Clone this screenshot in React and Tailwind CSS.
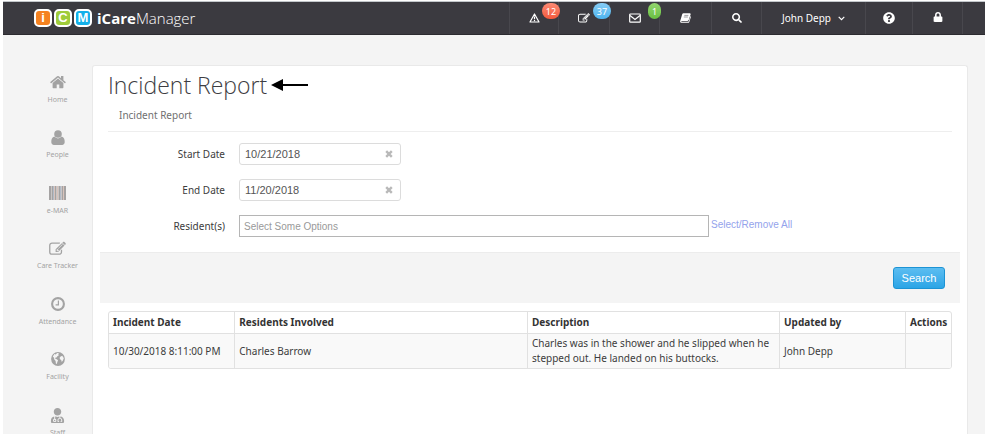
import React from "react";
import { FaLock, FaQuestionCircle, FaSearch, FaUserMd } from "react-icons/fa";

function HomeIcon() {
  return (
    <svg viewBox="0 0 16 14" className="h-[14px] w-4" fill="currentColor" aria-hidden="true">
      <path d="M8 3.6 2.6 8.1v4.4c0 .4.3.7.7.7h3.4V9.6h2.6v3.6h3.4c.4 0 .7-.3.7-.7V8.100z" />
      <path d="M15.700 7.100 13.400 5.200V1.300c0-.2-.1-.3-.3-.3h-1.800c-.2 0-.3.1-.3.3v1.900L8.900 1.300a1.400 1.400 0 0 0-1.800 0L.3 7.100c-.1.100-.1.300 0 .4l.6.700c.1.100.3.100.4 0L8 2.600l6.700 5.600c.1.100.3.100.4 0l.6-.7c.1-.1.1-.3 0-.4z" />
    </svg>
  );
}

function PersonIcon() {
  return (
    <svg viewBox="0 0 14 15" className="h-[15px] w-[14px]" fill="currentColor" aria-hidden="true">
      <circle cx="7" cy="4" r="3.8" />
      <path d="M3.400 6.600C1 7 .3 9.400.3 12.100.3 13.800 1.300 15 2.900 15h8.200c1.600 0 2.600-1.200 2.600-2.900 0-2.700-.7-5.100-3.100-5.500A5.200 5.200 0 0 1 7 8.500a5.200 5.200 0 0 1-3.600-1.900z" />
    </svg>
  );
}

function BarcodeIcon() {
  return (
    <svg viewBox="0 0 17 14" className="h-[14px] w-[17px]" aria-hidden="true">
      <path fill="#c9c5c5" d="M0 0h17v14H0z" />
      <path fill="#a5a3a3" d="M0 0h2v14H0zM3 0h1v14H3zM6 0h1v14H6zM10 0h1v14h-1zM13 0h1v14h-1zM15 0h2v14h-2z" />
      <path fill="#d8c3bb" d="M5 0h1v14H5zM8 0h1v14H8zM14 0h1v14h-1z" />
      <path fill="#b2bcc9" d="M4 0h1v14H4zM11 0h1v14h-1z" />
    </svg>
  );
}

function EditIcon({ className }) {
  return (
    <svg viewBox="0 0 18 15" className={className} fill="currentColor" aria-hidden="true">
      <path d="M3.200 1.100h7.400c.4 0 .8.100 1.100.200.2.100.2.300.1.400l-.7.700c-.1.100-.2.100-.3.100H3.200c-1 0-1.700.8-1.700 1.700v6.900c0 1 .7 1.700 1.700 1.700h7.600c1 0 1.700-.7 1.700-1.700V9.600c0-.1 0-.2.100-.2l.7-.7c.2-.2.600-.1.600.2v2.200c0 1.700-1.400 3.100-3.100 3.100H3.200A3.100 3.100 0 0 1 .1 11.100V4.200c0-1.700 1.400-3.100 3.100-3.100z" />
      <path fillRule="evenodd" d="m13.800 1.600 2.600 2.600-6.700 6.900H7V8.400zM8 8.900v.7h.8v.8h.8l.9-.9-1.600-1.500zM14 3.100 9.600 7.500c-.2.200.1.500.3.300l4.400-4.400c.2-.2-.1-.5-.3-.3z" />
      <path d="m17.500 3.200-.7.700-2.600-2.600.7-.7c.4-.4 1-.4 1.400 0l1.200 1.200c.4.400.4 1 0 1.400z" />
    </svg>
  );
}

function ClockIcon() {
  return (
    <svg viewBox="0 0 14 14" className="h-[14px] w-[14px]" fill="none" stroke="currentColor" aria-hidden="true">
      <circle cx="7" cy="7" r="5.900" strokeWidth="2.100" />
      <path strokeWidth="1.200" d="M7.400 3.600v4.200H4.600" />
    </svg>
  );
}

function GlobeIcon() {
  return (
    <svg viewBox="0 0 14 14" className="h-[14px] w-[14px]" aria-hidden="true">
      <circle cx="7" cy="7" r="6.900" fill="currentColor" />
      <path fill="#f4f4f4" d="M6.200.9 8 1.300l-.9 1.100 1 .5-1.700 1.300-.9 1.300-1.300.3.300 1.100 1.400.3 1.200 1.300-.8 1.500-.4 1.900-1-.5-.3-2.400-1.300-1.400-.3-1.900L1.800 4.400l1.600-2.300 1.300.5zM9.600 4.400l1.600-.6.900 1.100.7 1.400-.9 2.300-1.100 1.300-.6-2-1.200-.6-.4-1.500z" />
    </svg>
  );
}

function WarningIcon() {
  return (
    <svg viewBox="0 0 11 10" className="h-[10px] w-[11px]" fill="none" stroke="currentColor" aria-hidden="true">
      <path strokeWidth="1.200" strokeLinejoin="round" d="M5.500 1 10 9H1z" />
      <path strokeWidth="1.200" d="M5.500 3.500v2.800M5.500 7v1.200" />
    </svg>
  );
}

function EnvelopeIcon() {
  return (
    <svg viewBox="0 0 12 10" className="h-[10px] w-3" fill="none" stroke="currentColor" aria-hidden="true">
      <rect x=".7" y="1" width="10.600" height="8.200" rx=".8" strokeWidth="1.200" />
      <path strokeWidth="1.200" d="m1 2.500 5 4 5-4" />
    </svg>
  );
}

function BookIcon() {
  return (
    <svg viewBox="0 0 11 10" className="h-[10px] w-[11px]" aria-hidden="true">
      <path fill="#fff" d="M3.400.3h6.400c.6 0 1 .5.8 1.100L8.700 7.100c-.2.500-.6.800-1.100.8H1.700c-.7 0-.6.900.1.900h6.300c.4 0 .6-.2.700-.5l1.700-5.200c.4.200.5.500.4.900L9.300 8.900c-.2.500-.6.900-1.200.9H1.700C.7 9.800-.1 8.900.2 8L2.200 1.300C2.400.7 2.900.3 3.400.3z" />
      <path fill="none" stroke="#77767b" strokeWidth=".7" d="M4.300 2.400h4.100M3.800 4h4.100" />
    </svg>
  );
}

function ChevronIcon() {
  return (
    <svg viewBox="0 0 7 5" className="h-[5px] w-[7px]" fill="none" stroke="currentColor" aria-hidden="true">
      <path strokeWidth="1.200" d="m.7.900 2.800 2.700L6.300.9" />
    </svg>
  );
}

function ClearIcon() {
  return (
    <svg viewBox="0 0 8 8" className="h-2 w-2" fill="none" stroke="currentColor" aria-hidden="true">
      <path strokeWidth="2.400" d="m1.200 1.200 5.600 5.600M6.800 1.200 1.200 6.800" />
    </svg>
  );
}

const sideItems = [
  { label: "Home", icon: <HomeIcon /> },
  { label: "People", icon: <PersonIcon /> },
  { label: "e-MAR", icon: <BarcodeIcon /> },
  { label: "Care Tracker", icon: <EditIcon className="h-[15px] w-[17px]" /> },
  { label: "Attendance", icon: <ClockIcon /> },
  { label: "Facility", icon: <GlobeIcon /> },
  { label: "Staff", icon: <FaUserMd size={15} /> },
];

function LogoTile({ letter, color }) {
  return (
    <span
      className={`flex h-[18px] w-[18px] items-center justify-center rounded-[5px] border-2 border-white font-['Liberation_Sans',sans-serif] text-[13px] leading-none font-bold text-white ${color}`}
    >
      {letter}
    </span>
  );
}

function NavButton({ label, width, badge, badgeColor, children }) {
  return (
    <button
      type="button"
      aria-label={label}
      className={`relative flex items-center justify-center border-l border-[#48474d] text-white ${width}`}
    >
      {children}
      {badge && (
        <span
          className={`absolute top-px -right-[2px] z-10 flex h-4 items-center justify-center rounded-full text-[9px] leading-none text-white ${badgeColor}`}
        >
          {badge}
        </span>
      )}
    </button>
  );
}

function Header() {
  return (
    <header className="flex h-[34px] shrink-0 items-stretch justify-between border-t border-b border-t-[#c3c7cb] border-b-[#2c2b30] bg-[#3b3a40] pr-[22px] pl-[31px]">
      <a href="#home" className="flex items-center gap-[5px] pb-px">
        <span className="flex gap-[2px]">
          <LogoTile letter="i" color="bg-[#f58220]" />
          <LogoTile letter="C" color="bg-[#9fcc3b]" />
          <LogoTile letter="M" color="bg-[#13b0ea]" />
        </span>
        <span className="font-['Open_Sans',sans-serif] text-[15px] leading-5 font-light text-white">
          <b className="font-bold">iCare</b>Manager
        </span>
      </a>
      <nav className="flex items-stretch">
        <NavButton label="Alerts" width="w-[49px]" badge="12" badgeColor="w-[18px] bg-linear-to-b from-[#fb8a74] to-[#f3583b]">
          <WarningIcon />
        </NavButton>
        <NavButton label="Tasks" width="w-[51px]" badge="37" badgeColor="w-[18px] bg-linear-to-b from-[#86cdf5] to-[#4db4ee]">
          <EditIcon className="h-[10px] w-3" />
        </NavButton>
        <NavButton label="Messages" width="w-[50px]" badge="1" badgeColor="w-[13px] bg-linear-to-b from-[#93d66f] to-[#68bf40]">
          <EnvelopeIcon />
        </NavButton>
        <NavButton label="Library" width="w-[52px]">
          <BookIcon />
        </NavButton>
        <NavButton label="Search" width="w-[50px]">
          <FaSearch size={10} />
        </NavButton>
        <button
          type="button"
          className="flex w-[104px] items-center justify-center gap-[7px] border-l border-[#48474d] text-[10px] text-white"
        >
          John Depp
          <ChevronIcon />
        </button>
        <NavButton label="Help" width="w-[47px]">
          <FaQuestionCircle size={12} />
        </NavButton>
        <NavButton label="Lock" width="w-[51px] border-r pb-[3px]">
          <FaLock size={10} />
        </NavButton>
      </nav>
    </header>
  );
}

function Sidebar() {
  return (
    <nav className="w-[89px] shrink-0 pt-[39px] pl-5">
      <ul>
        {sideItems.map((item) => (
          <li key={item.label} className="h-[55px] even:h-14">
            <a href={`#${item.label}`} className="flex flex-col items-center gap-[5px] text-[#a3a3a3]">
              <span className="flex h-4 items-center">{item.icon}</span>
              <span className="text-[7px] leading-[10px] whitespace-nowrap">{item.label}</span>
            </a>
          </li>
        ))}
      </ul>
    </nav>
  );
}

function DateField({ id, label, value }) {
  return (
    <div className="flex items-center gap-[14px]">
      <label htmlFor={id} className="w-[117px] text-right">
        {label}
      </label>
      <div className="flex h-[22px] w-[162px] items-center justify-between rounded-[3px] border border-[#dcdcdc] bg-white pr-[7px] pl-[5px]">
        <input
          id={id}
          type="text"
          defaultValue={value}
          className="w-[110px] bg-transparent font-['Liberation_Sans',Arial,sans-serif] text-[11px] text-[#555] outline-none"
        />
        <button type="button" aria-label={`Clear ${label}`} className="text-[#b9b9b9]">
          <ClearIcon />
        </button>
      </div>
    </div>
  );
}

const cell = "border-r border-[#e1e1e1] px-1 py-0 text-left last:border-r-0";

function IncidentTable() {
  return (
    <div className="mt-2 overflow-hidden rounded-[3px] border border-[#e1e1e1]">
      <table className="w-full table-fixed border-separate border-spacing-0 leading-[15px]">
        <colgroup>
          <col className="w-[15%]" />
          <col />
          <col className="w-[252px]" />
          <col className="w-[126px]" />
          <col className="w-[45px]" />
        </colgroup>
        <thead>
          <tr className="h-[21px] font-bold text-[#333]">
            <th scope="col" className={cell}>Incident Date</th>
            <th scope="col" className={cell}>Residents Involved</th>
            <th scope="col" className={cell}>Description</th>
            <th scope="col" className={cell}>Updated by</th>
            <th scope="col" className={cell}>Actions</th>
          </tr>
        </thead>
        <tbody>
          <tr className="h-[35px] bg-[#f9f9f9]">
            <td className={`${cell} border-t whitespace-nowrap`}>10/30/2018 8:11:00 PM</td>
            <td className={`${cell} border-t`}>Charles Barrow</td>
            <td className={`${cell} border-t`}>
              Charles was in the shower and he slipped when he stepped out. He landed on his buttocks.
            </td>
            <td className={`${cell} border-t`}>John Depp</td>
            <td className={`${cell} border-t`}></td>
          </tr>
        </tbody>
      </table>
    </div>
  );
}

export default function App() {
  return (
    <div className="h-screen overflow-hidden bg-white pt-px pr-[5px] pl-[3px] font-['Noto_Sans','Open_Sans',sans-serif] text-[10px] text-[#3c3c3c]">
      <div className="flex h-full flex-col bg-[#f4f4f4]">
        <Header />
        <div className="flex min-h-0 flex-1 items-stretch">
          <Sidebar />
          <main className="mt-[30px] mr-[17px] min-w-0 flex-1 rounded-t-[3px] border border-b-0 border-[#e9e9e9] bg-white px-[15px] pt-[3px]">
            <div className="flex items-center gap-1">
              <h1 className="font-['Open_Sans',sans-serif] text-[23px] leading-8 font-light text-[#3d3d42]">
                Incident Report
              </h1>
              <svg viewBox="0 0 37 12" className="h-3 w-[37px]" aria-hidden="true">
                <path d="M0 6 12 0v12z" />
                <path d="M10 5h27v2H10z" />
              </svg>
            </div>
            <p className="border-b border-[#eee] pt-[6px] pb-[8px] pl-[11px] leading-4 text-[#707070]">Incident Report</p>

            <form onSubmit={(event) => event.preventDefault()}>
              <div className="flex flex-col gap-[14px] pt-[11px] pb-[15px]">
                <DateField id="start-date" label="Start Date" value="10/21/2018" />
                <DateField id="end-date" label="End Date" value="11/20/2018" />
                <div className="flex items-center">
                  <label htmlFor="residents" className="mr-[14px] w-[117px] text-right">
                    Resident(s)
                  </label>
                  <input
                    id="residents"
                    type="text"
                    placeholder="Select Some Options"
                    className="mr-[2px] h-[22px] w-[470px] border border-[#b5b5b5] bg-white px-1 font-['Liberation_Sans',Arial,sans-serif] text-[10px] outline-none placeholder:text-[#999]"
                  />
                  <a href="#select-all" className="pb-1 font-['Liberation_Sans',Arial,sans-serif] text-[10px] text-[#94a3ec]">
                    Select/Remove All
                  </a>
                </div>
              </div>
              <div className="-mx-2 flex justify-end border-t border-[#ececec] bg-[#f4f4f4] pt-[14px] pr-[15px] pb-[14px]">
                <button
                  type="submit"
                  className="h-[22px] w-[52px] rounded-[3px] border border-[#1c93d4] bg-linear-to-b from-[#5bbdf1] to-[#2aa5e6] font-['Liberation_Sans',Arial,sans-serif] text-[11px] leading-none text-white"
                >
                  Search
                </button>
              </div>
            </form>

            <IncidentTable />
          </main>
        </div>
      </div>
    </div>
  );
}
